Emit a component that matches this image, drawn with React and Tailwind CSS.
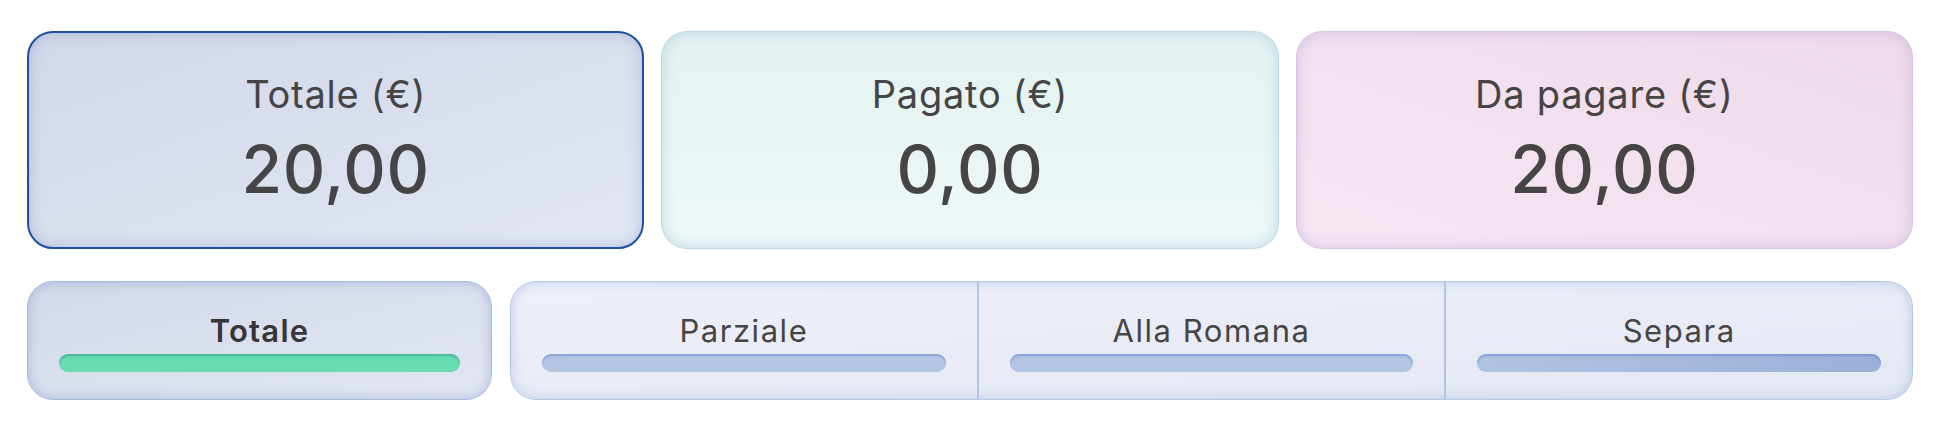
import React from 'react';

const cards = [
  {
    label: 'Totale (€)',
    value: '20,00',
    cls: 'bg-gradient-to-br from-[#d1d8e8] to-[#e2e6f3] border-2 border-[#1f4f9e] shadow-[inset_0_0_14px_rgba(90,120,190,0.35)] pt-[38px]',
  },
  {
    label: 'Pagato (€)',
    value: '0,00',
    cls: 'bg-gradient-to-b from-[#e4f2f2] to-[#eef8f8] border border-[#bcd8e4] shadow-[inset_0_0_14px_rgba(120,170,200,0.4)] pt-[39px]',
  },
  {
    label: 'Da pagare (€)',
    value: '20,00',
    cls: 'bg-gradient-to-tr from-[#f6e7f3] to-[#eedaea] border border-[#d6c3e0] shadow-[inset_0_0_14px_rgba(170,140,200,0.4)] pt-[39px]',
  },
];

const modes = [
  { label: 'Parziale', bar: 'bg-[#b4c6e4]' },
  { label: 'Alla Romana', bar: 'bg-[#b3c5e4]' },
  { label: 'Separa', bar: 'bg-gradient-to-r from-[#b0c3e3] to-[#9ab0d8]' },
];

const Bar = ({ cls }) => (
  <div className={'h-[18px] w-full rounded-full ' + cls} />
);

export default function App() {
  return (
    <div
      className="w-[1940px] h-[422px] bg-white px-[27px] pt-[31px] text-[#454545]"
      style={{ fontFamily: 'Inter, "Noto Sans", sans-serif' }}
    >
      <div className="grid grid-cols-3 gap-[17px]">
        {cards.map((c) => (
          <div
            key={c.label}
            className={'h-[218px] rounded-[26px] flex flex-col items-center ' + c.cls}
          >
            <div className="text-[38px] leading-[46px] tracking-[0.02em]">{c.label}</div>
            <div className="text-[66px] leading-[66px] font-medium mt-[19px] tracking-[0.01em]">{c.value}</div>
          </div>
        ))}
      </div>

      <div className="flex gap-[18px] mt-[32px] h-[119px]">
        <div className="w-[465px] rounded-[26px] bg-gradient-to-br from-[#d3d9ea] to-[#e2e6f2] border border-[#a9bbdd] shadow-[inset_0_0_12px_rgba(100,130,200,0.4)] flex flex-col items-center px-[31px] pt-[31px]">
          <div className="text-[31px] leading-[36px] font-semibold tracking-[0.04em] text-[#363636]">Totale</div>
          <div className="w-full mt-[5px]">
            <Bar cls="bg-[#66dcb0] shadow-[inset_0_2px_2px_rgba(40,140,120,0.45)]" />
          </div>
        </div>

        <div className="flex-1 flex rounded-[26px] bg-gradient-to-br from-[#eef0f8] to-[#e4e8f3] border border-[#b7c7e6] shadow-[inset_0_0_12px_rgba(110,140,210,0.35)] overflow-hidden">
          {modes.map((m, i) => (
            <div
              key={m.label}
              className={
                'flex-1 flex flex-col items-center px-[31px] pt-[31px] ' +
                (i > 0 ? 'border-l-2 border-[#b3c4e4]' : '')
              }
            >
              <div className="text-[31px] leading-[36px] tracking-[0.05em] text-[#454545]">{m.label}</div>
              <div className="w-full mt-[5px]">
                <Bar cls={m.bar + ' shadow-[inset_0_2px_2px_rgba(90,130,200,0.5)]'} />
              </div>
            </div>
          ))}
        </div>
      </div>
    </div>
  );
}
